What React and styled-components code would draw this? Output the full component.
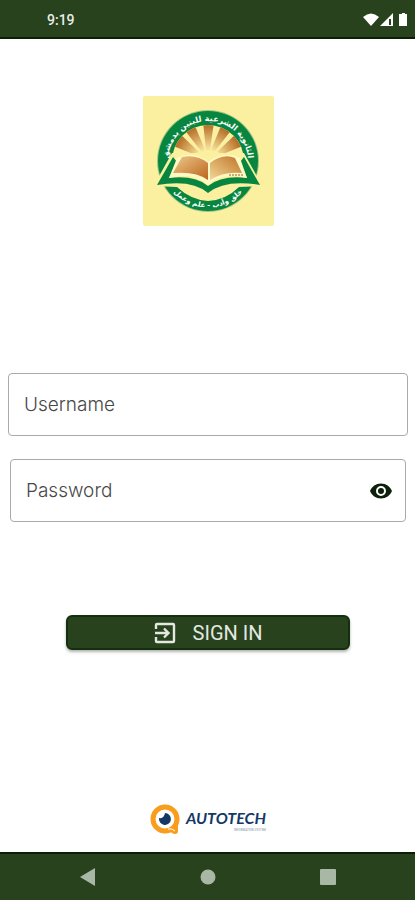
import React, { useState } from "react";
import styled, { createGlobalStyle } from "styled-components";

const green = "#28421e";
const darkEdge = "#0a1f05";

const GlobalStyle = createGlobalStyle`
  * { box-sizing: border-box; }
  body { margin: 0; background: #fff; font-family: Roboto, "Noto Sans", sans-serif; }
`;

const Screen = styled.div`
  display: flex;
  flex-direction: column;
  min-height: 100vh;
  background: #fff;
`;

const StatusBar = styled.header`
  display: flex;
  align-items: center;
  justify-content: space-between;
  height: 39px;
  padding: 3px 5px 0 47px;
  background: ${green};
  border-bottom: 2px solid ${darkEdge};
  color: #e9eee7;
`;

const Clock = styled.time`
  font-size: 14px;
  line-height: 16px;
  font-weight: 500;
`;

const StatusIcons = styled.svg`
  display: block;
  width: 48px;
  height: 18px;
`;

const Main = styled.main`
  flex: 1;
  display: flex;
  flex-direction: column;
  align-items: center;
  padding: 57px 7px 17px 8px;
`;

const Emblem = styled.svg`
  display: block;
  width: 131px;
  height: 130px;
  border-radius: 2px;
`;

const Form = styled.form`
  display: flex;
  flex-direction: column;
  align-items: center;
  width: 100%;
  margin-top: 147px;
`;

const Field = styled.div`
  display: flex;
  align-items: center;
  width: ${(p) => (p.$inset ? "calc(100% - 4px)" : "100%")};
  height: 63px;
  margin-bottom: ${(p) => (p.$inset ? "93px" : "23px")};
  padding: 0 12px 0 15px;
  border: 1px solid #aaa;
  border-radius: 4px;
  background: #fff;
`;

const TextInput = styled.input`
  flex: 1;
  min-width: 0;
  padding: 0;
  border: 0;
  outline: 0;
  background: transparent;
  color: #333;
  font-family: Inter, Roboto, sans-serif;
  font-size: 19px;
  font-weight: 300;
  line-height: 24px;
  &::placeholder { color: #484848; opacity: 1; }
`;

const EyeButton = styled.button`
  display: flex;
  padding: 0;
  border: 0;
  background: none;
  color: #0d200b;
  cursor: pointer;
`;

const SignInButton = styled.button`
  display: flex;
  align-items: center;
  justify-content: center;
  gap: 17px;
  width: 71%;
  height: 35px;
  padding: 0;
  border: 2px solid #12300b;
  border-radius: 6px;
  background: ${green};
  box-shadow: 0 2px 3px rgba(0, 0, 0, 0.3);
  color: #e3e9e0;
  font-family: Roboto, sans-serif;
  font-size: 20px;
  line-height: 24px;
  cursor: pointer;
`;

const Brand = styled.footer`
  display: flex;
  align-items: center;
  gap: 5px;
  margin-top: auto;
`;

const BrandText = styled.div`
  display: flex;
  flex-direction: column;
  align-items: flex-end;
  color: #143966;
`;

const BrandName = styled.strong`
  font-family: Lato, sans-serif;
  font-size: 16px;
  line-height: 20px;
  font-weight: 700;
  font-style: italic;
`;

const BrandTag = styled.small`
  font-size: 3px;
  line-height: 4px;
  color: #8292aa;
`;

const NavBar = styled.nav`
  display: flex;
  align-items: center;
  justify-content: space-around;
  height: 48px;
  padding: 0 27px 0 28px;
  background: ${green};
  border-top: 2px solid ${darkEdge};
`;

const NavButton = styled.button`
  display: flex;
  padding: 0;
  border: 0;
  background: none;
  color: #a9b8a5;
`;

function SchoolEmblem() {
  return (
    <Emblem viewBox="0 0 131 130" role="img" aria-label="School emblem">
      <defs>
        <linearGradient id="page" x1="0" y1="0" x2="1" y2="1">
          <stop offset="0" stopColor="#efc98a" />
          <stop offset="1" stopColor="#b9641c" />
        </linearGradient>
        <linearGradient id="pageRight" x1="1" y1="0" x2="0" y2="1">
          <stop offset="0" stopColor="#bf7428" />
          <stop offset="1" stopColor="#f3d797" />
        </linearGradient>
        <radialGradient id="ray" gradientUnits="userSpaceOnUse" cx="65" cy="64" r="38">
          <stop offset="0.3" stopColor="#f7e09a" />
          <stop offset="0.9" stopColor="#b9722b" />
        </radialGradient>
        <clipPath id="disc"><circle cx="65" cy="65" r="36" /></clipPath>
        <path id="topArc" d="M26 74 A40 40 0 1 1 104 74" />
        <path id="bottomArc" d="M21 79 A46 46 0 0 0 109 79" />
      </defs>
      <rect width="131" height="130" fill="#faf0a0" />
      <circle cx="65" cy="65" r="51" fill="#a3c485" />
      <circle cx="65" cy="65" r="50" fill="#08863f" />
      <circle cx="65" cy="65" r="36" fill="#faf0a0" />
      <g clipPath="url(#disc)" fill="url(#ray)">
        <path d="M63 54 L60 26 H71 L67 54Z" />
        <path d="M58 55 L40 32 L50 25 L62 54Z" />
        <path d="M72 55 L90 32 L80 25 L68 54Z" />
        <path d="M50 58 L25 48 L33 34 L56 56Z" />
        <path d="M80 58 L105 48 L97 34 L74 56Z" />
      </g>
      <path d="M29 57 L10 91 Q22 90 34 91 Q48 104 65 105 Q83 104 96 91 Q108 90 120 91 L101 57Z" fill="#faf0a0" />
      <path d="M30 61 L14 89 Q49 83 65 97 Q82 83 117 89 L101 61 L97 66 L104 82 Q79 79 65 90 Q52 79 26 82 L34 66Z" fill="#08863f" />
      <path d="M34 62 Q51 54 65 66 Q81 54 97 62 L104 82 Q79 76 65 89 Q51 76 26 82Z" fill="#fff9c6" />
      <path d="M39 61 Q54 58 65 67 V84 Q53 75 30 77Z" fill="url(#page)" />
      <path d="M67 67 Q80 57 92 62 L99 77 Q81 75 67 84Z" fill="url(#pageRight)" />
      <path d="M86 79 H101" stroke="#96612b" strokeWidth="1" strokeDasharray="2 1" fill="none" />
      <g fill="#fff" fontFamily="DejaVu Sans, sans-serif" fontWeight="700" textAnchor="middle">
        <text fontSize="8" direction="rtl">
          <textPath href="#topArc" startOffset="50%">الثانوية الشرعية للبنين بدمشق</textPath>
        </text>
        <text fontSize="7" direction="rtl">
          <textPath href="#bottomArc" startOffset="50%">خلق وأدب - علم وعمل</textPath>
        </text>
      </g>
    </Emblem>
  );
}

export default function App() {
  const [shown, setShown] = useState(false);
  return (
    <>
      <GlobalStyle />
      <Screen>
        <StatusBar>
          <Clock>9:19</Clock>
          <StatusIcons viewBox="0 0 48 18" fill="#fff" aria-hidden="true">
            <path d="M1 6 Q9 -1 17 6 L9 15Z" />
            <path fillRule="evenodd" d="M18 15 L31 2 V15Z M27 8 V14 H29 V8Z" />
            <path d="M40 2 H43 V3 H45 V15 H37 V3 H40Z" />
          </StatusIcons>
        </StatusBar>
        <Main>
          <SchoolEmblem />
          <Form onSubmit={(e) => e.preventDefault()}>
            <Field>
              <TextInput aria-label="Username" placeholder="Username" autoComplete="username" />
            </Field>
            <Field $inset>
              <TextInput
                aria-label="Password"
                placeholder="Password"
                type={shown ? "text" : "password"}
                autoComplete="current-password"
              />
              <EyeButton type="button" aria-label="Show password" onClick={() => setShown(!shown)}>
                <svg width="24" height="24" viewBox="0 0 24 24" fill="currentColor" aria-hidden="true">
                  <path d="M12 4.500C7 4.500 2.730 7.610 1 12c1.730 4.390 6 7.500 11 7.500s9.270-3.110 11-7.500c-1.730-4.390-6-7.500-11-7.500zM12 17a5 5 0 1 1 0-10 5 5 0 0 1 0 10zm0-8a3 3 0 1 0 0 6 3 3 0 0 0 0-6z" />
                </svg>
              </EyeButton>
            </Field>
            <SignInButton type="submit">
              <svg width="22" height="22" viewBox="0 0 22 22" fill="none" stroke="currentColor" strokeWidth="2.400" aria-hidden="true">
                <path d="M2 7 V3 Q2 2 3 2 H19 Q20 2 20 3 V19 Q20 20 19 20 H3 Q2 20 2 19 V15" />
                <path d="M1 11 H14 M10 6.500 L14.500 11 L10 15.500" />
              </svg>
              SIGN IN
            </SignInButton>
          </Form>
          <Brand>
            <svg width="31" height="31" viewBox="0 0 31 31" aria-hidden="true">
              <circle cx="15" cy="15" r="12" fill="#fff" stroke="#f99d1c" strokeWidth="5" />
              <path d="M19 26 Q25 24 28 17 V27 Q28 30 25 30 Q22 30 19 26Z" fill="#f99d1c" />
              <path d="M18 25 Q22 24 25 27" stroke="#fff" strokeWidth="1" fill="none" />
              <path d="M15 9 A6 6 0 1 1 9 14 Q14 15 15 9Z" fill="#143966" />
            </svg>
            <BrandText>
              <BrandName>AUTOTECH</BrandName>
              <BrandTag>INFORMATION SYSTEM</BrandTag>
            </BrandText>
          </Brand>
        </Main>
        <NavBar aria-label="System navigation">
          <NavButton aria-label="Back">
            <svg width="18" height="18" viewBox="0 0 18 18" fill="currentColor"><path d="M1 9 L16 0 V18Z" /></svg>
          </NavButton>
          <NavButton aria-label="Home">
            <svg width="18" height="18" viewBox="0 0 18 18" fill="currentColor"><circle cx="9" cy="9" r="7.500" /></svg>
          </NavButton>
          <NavButton aria-label="Recent apps">
            <svg width="18" height="18" viewBox="0 0 18 18" fill="currentColor"><rect x="1" y="1" width="16" height="16" rx="1" /></svg>
          </NavButton>
        </NavBar>
      </Screen>
    </>
  );
}
